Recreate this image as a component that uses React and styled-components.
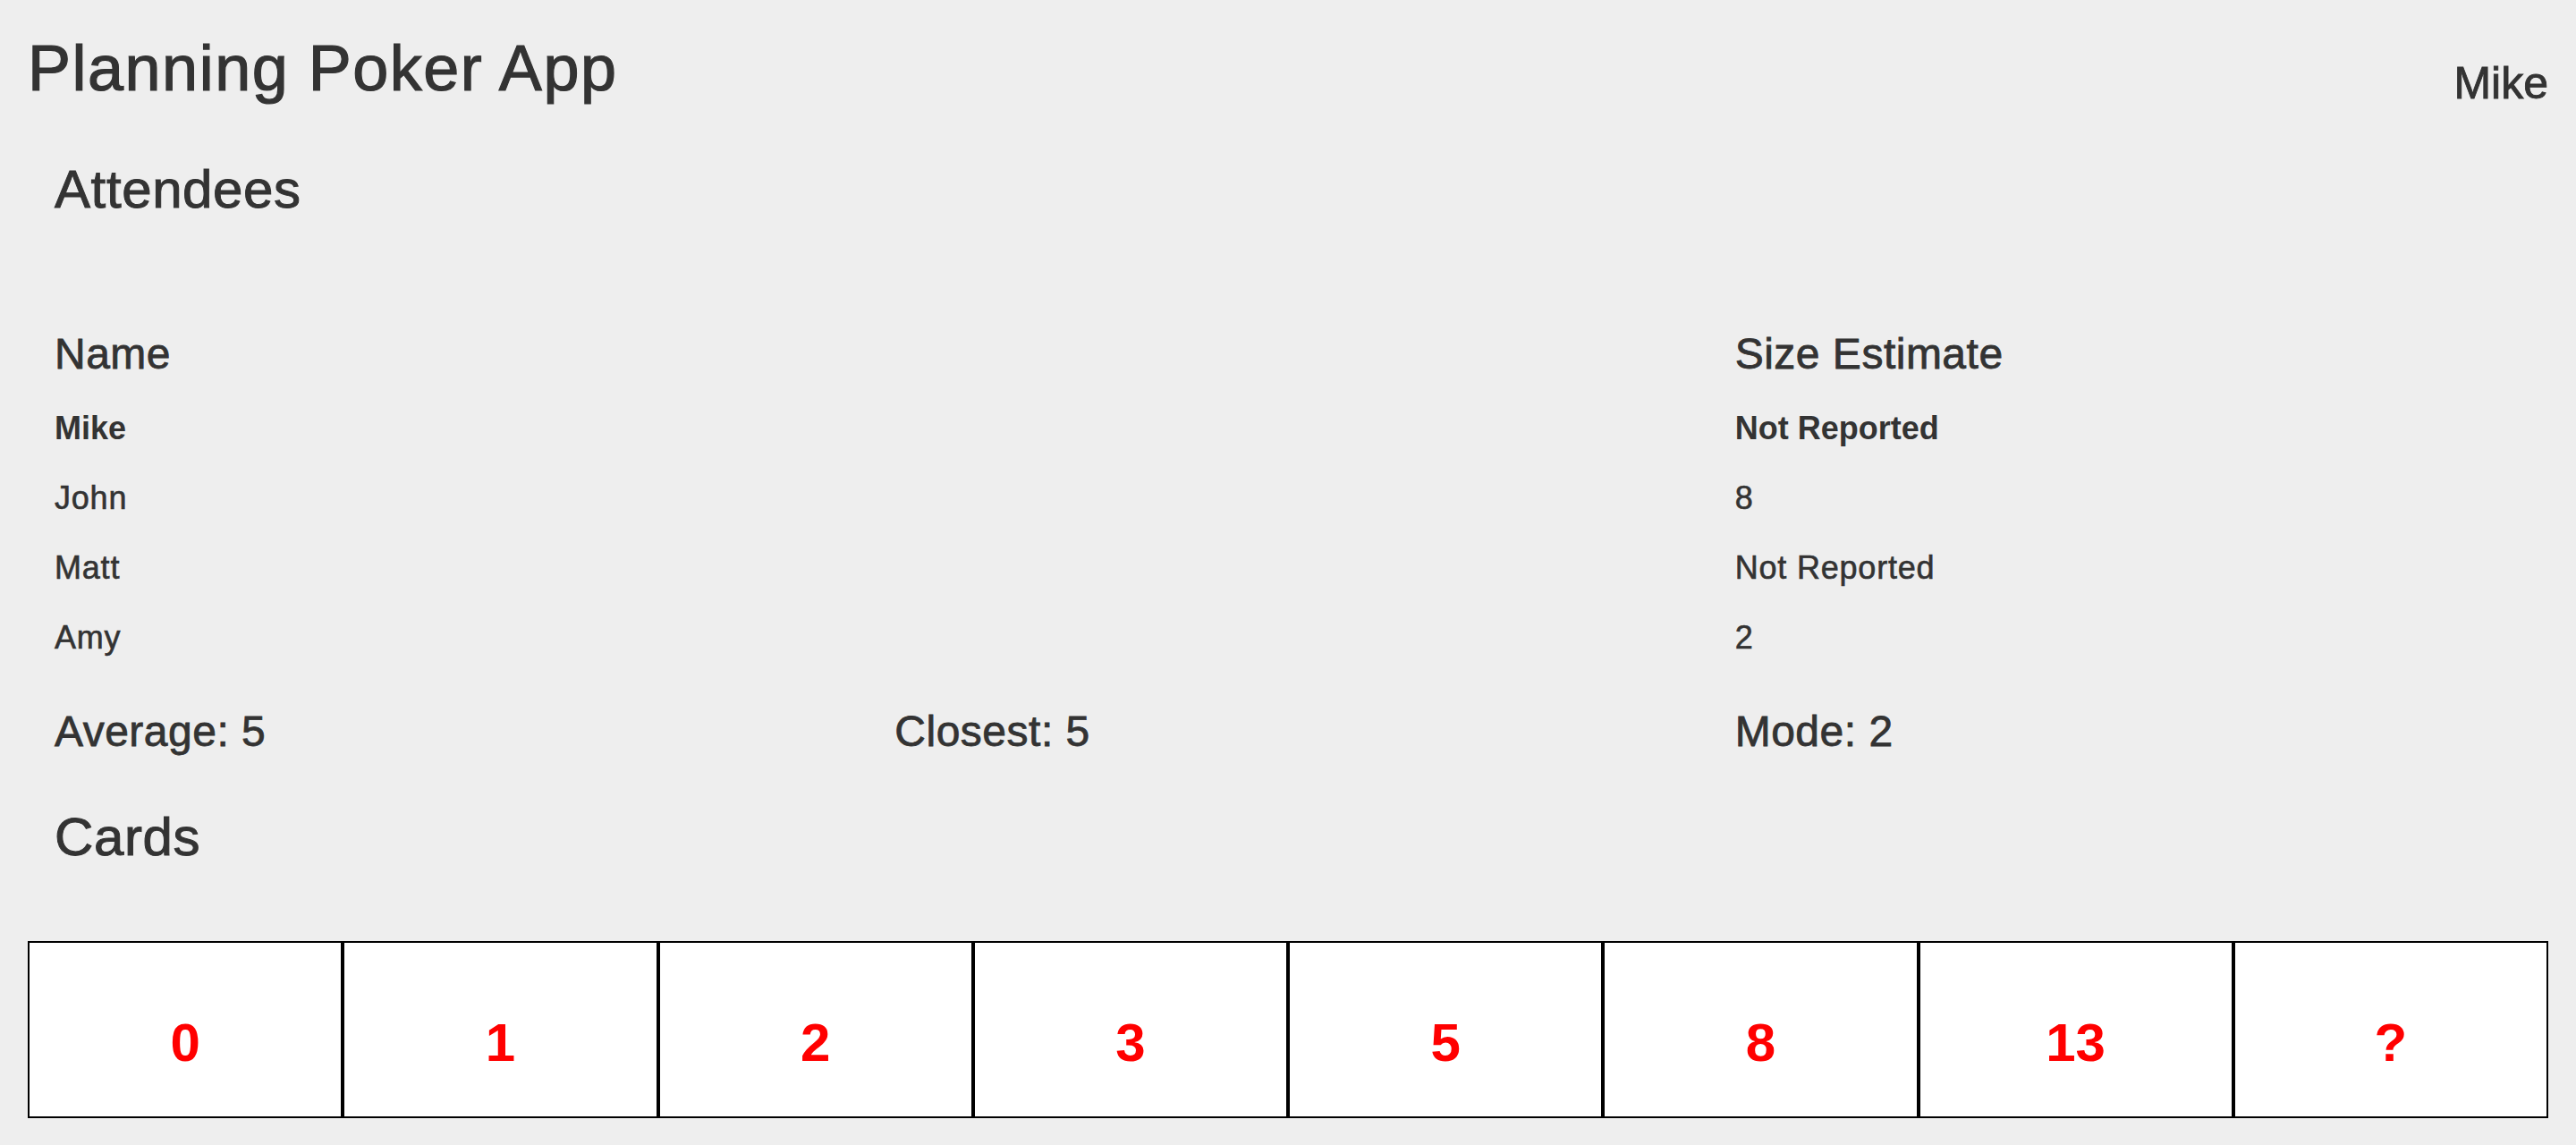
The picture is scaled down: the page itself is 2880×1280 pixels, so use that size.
import React from "react";
import styled, { createGlobalStyle } from "styled-components";

const GlobalStyle = createGlobalStyle`
  body {
    margin: 0;
    background-color: #eeeeee;
    color: #333333;
    font-family: "Liberation Sans", Helvetica, Arial, sans-serif;
  }
`;

const Page = styled.div`
  padding: 0 31px;
`;

const Header = styled.div`
  display: flex;
  justify-content: space-between;
  align-items: flex-start;
  padding-top: 37px;
`;

// the reference uses a medium weight, a thin stroke gets close to it
const AppTitle = styled.h1`
  margin: 0;
  font-size: 72px;
  line-height: 79px;
  font-weight: 400;
  letter-spacing: 1.5px;
  -webkit-text-stroke: 1.2px #333333;
`;

const UserName = styled.div`
  margin-top: 26px;
  font-size: 50px;
  line-height: 60px;
  -webkit-text-stroke: 0.9px #333333;
`;

const SectionTitle = styled.h2`
  margin: ${(p) => p.$top}px 0 0;
  padding: 0 30px;
  font-size: 60px;
  line-height: 66px;
  font-weight: 400;
  letter-spacing: 0.6px;
  -webkit-text-stroke: 1px #333333;
`;

const Columns = styled.div`
  display: grid;
  grid-template-columns: repeat(3, 1fr);
  margin-top: ${(p) => p.$top}px;
`;

const Cell = styled.div`
  grid-column: ${(p) => (p.$wide ? "span 2" : "span 1")};
  padding: 0 30px;
  font-size: 36px;
  line-height: 78px;
  font-weight: ${(p) => (p.$bold ? 700 : 400)};
  letter-spacing: ${(p) => (p.$bold ? 0 : 0.8)}px;
  -webkit-text-stroke: ${(p) => (p.$bold ? 0 : 0.6)}px #333333;
`;

const HeadCell = styled(Cell)`
  font-size: 48px;
  line-height: 53px;
  padding-bottom: 18px;
  letter-spacing: 0.5px;
  -webkit-text-stroke: 0.8px #333333;
`;

const Stat = styled.div`
  padding: 0 30px;
  font-size: 48px;
  line-height: 53px;
  letter-spacing: 0.5px;
  -webkit-text-stroke: 0.8px #333333;
`;

const CardRow = styled.div`
  display: flex;
  margin-top: 83px;
`;

const Card = styled.div`
  flex: 1;
  height: 198px;
  box-sizing: border-box;
  padding-top: 79px;
  background-color: #ffffff;
  border: 2px solid #000000;
  text-align: center;
  color: #ff0000;
  font-size: 60px;
  line-height: 66px;
  font-weight: 700;
`;

const attendees = [
  { name: "Mike", estimate: "Not Reported", me: true },
  { name: "John", estimate: "8" },
  { name: "Matt", estimate: "Not Reported" },
  { name: "Amy", estimate: "2" },
];

const cards = ["0", "1", "2", "3", "5", "8", "13", "?"];

export default function App() {
  return (
    <Page>
      <GlobalStyle />
      <Header>
        <AppTitle>Planning Poker App</AppTitle>
        <UserName>Mike</UserName>
      </Header>

      <SectionTitle $top={56}>Attendees</SectionTitle>
      <Columns $top={124}>
        <HeadCell $wide>Name</HeadCell>
        <HeadCell>Size Estimate</HeadCell>
        {attendees.map((a) => (
          <React.Fragment key={a.name}>
            <Cell $wide $bold={a.me}>
              {a.name}
            </Cell>
            <Cell $bold={a.me}>{a.estimate}</Cell>
          </React.Fragment>
        ))}
      </Columns>

      <Columns $top={39}>
        <Stat>Average: 5</Stat>
        <Stat>Closest: 5</Stat>
        <Stat>Mode: 2</Stat>
      </Columns>

      <SectionTitle $top={59}>Cards</SectionTitle>
      <CardRow>
        {cards.map((c) => (
          <Card key={c}>{c}</Card>
        ))}
      </CardRow>
    </Page>
  );
}
